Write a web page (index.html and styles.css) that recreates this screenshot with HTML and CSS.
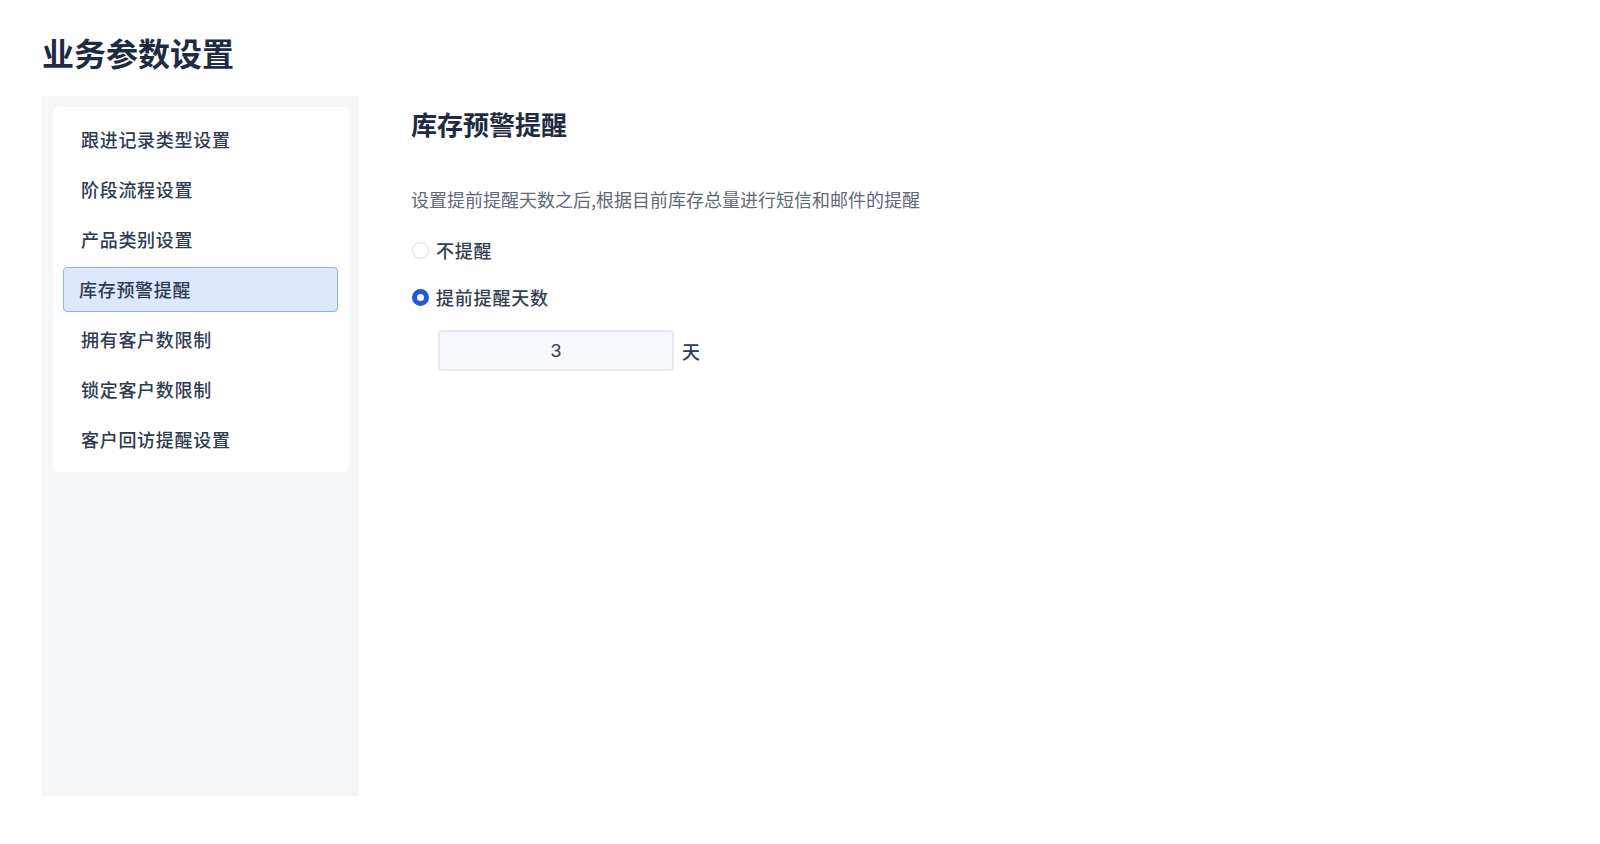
FILE: index.html
```html
<!DOCTYPE html>
<html lang="zh-CN">
<head>
  <meta charset="UTF-8" />
  <title>业务参数设置</title>
  <link rel="stylesheet" href="styles.css">
</head>
<body>
  <div class="page">
    <h1 class="page-title">业务参数设置</h1>

    <div class="layout">
      <div class="sidebar">
        <ul class="menu">
          <li class="menu-item">跟进记录类型设置</li>
          <li class="menu-item">阶段流程设置</li>
          <li class="menu-item">产品类别设置</li>
          <li class="menu-item active">库存预警提醒</li>
          <li class="menu-item">拥有客户数限制</li>
          <li class="menu-item">锁定客户数限制</li>
          <li class="menu-item">客户回访提醒设置</li>
        </ul>
      </div>

      <div class="content">
        <h2 class="section-title">库存预警提醒</h2>
        <p class="desc">设置提前提醒天数之后,根据目前库存总量进行短信和邮件的提醒</p>

        <label class="radio">
          <span class="radio-dot"></span>
          <span class="radio-label">不提醒</span>
        </label>
        <label class="radio checked">
          <span class="radio-dot"></span>
          <span class="radio-label">提前提醒天数</span>
        </label>

        <div class="days-row">
          <div class="days-input">3</div>
          <span class="days-unit">天</span>
        </div>
      </div>
    </div>
  </div>
</body>
</html>
```

FILE: styles.css
```css
body { margin: 0; background: #fff; font-family: "Noto Sans CJK SC", "Noto Sans", sans-serif; color: #2f3b52; }
.page { padding: 32px 0 0 42px; }
.page-title { margin: 0; font-size: 32px; line-height: 40px; font-weight: 700; color: #1f2b42; }

.layout { display: flex; margin-top: 24px; }
.sidebar { width: 317px; height: 700px; box-sizing: border-box; padding: 11px 10px 0 11px; background: #f5f6f8; }
.menu { list-style: none; margin: 0; padding: 10px 11px 10px 10px; background: #fff; border-radius: 6px; display: flex; flex-direction: column; gap: 5px; }
.menu-item { height: 45px; line-height: 45px; padding-left: 18px; font-size: 18px; font-weight: 500; letter-spacing: 0.7px; color: #2f3b52; box-sizing: border-box; }
.menu-item.active { padding-left: 15px; line-height: 43px; background: #dce9fc; border: 1px solid #86b4f6; border-radius: 4px; }

.content { padding: 10px 0 0 52px; }
.section-title { margin: 0; font-size: 26px; line-height: 36px; font-weight: 700; color: #1f2b42; }
.desc { margin: 44px 0 0; font-size: 18px; line-height: 26px; color: #5f697b; }

.radio { display: flex; align-items: center; height: 26px; margin-top: 21px; font-size: 18px; font-weight: 500; letter-spacing: 0.8px; color: #333e52; }
.desc + .radio { margin-top: 25px; }
.radio-dot { width: 17px; height: 17px; box-sizing: border-box; margin-left: 1px; border: 1.5px solid #dcdfe6; border-radius: 50%; background: #fff; }
.radio.checked .radio-dot { border: 5.5px solid #2258d6; background: #fff; }
.radio-label { margin-left: 7px; }

.days-row { display: flex; align-items: center; margin: 20px 0 0 27px; }
.days-input { width: 236px; height: 41px; box-sizing: border-box; border: 2px solid #e4e7ed; border-radius: 4px; background: #f6f8fb; text-align: center; line-height: 37px; font-family: "Liberation Sans", "Noto Sans CJK SC", sans-serif; font-size: 19px; color: #3a4354; }
.days-unit { margin-left: 8px; font-size: 18px; font-weight: 500; color: #2f3b52; }
```
